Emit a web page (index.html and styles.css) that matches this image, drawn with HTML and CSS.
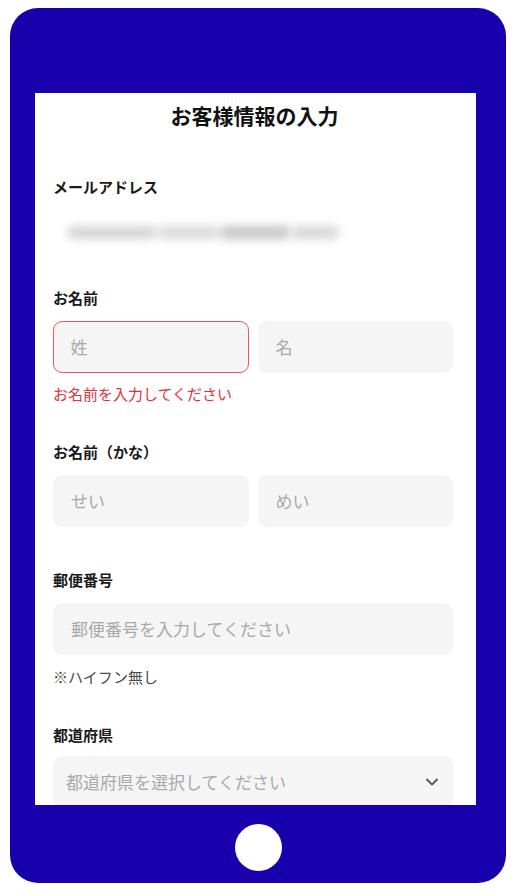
FILE: index.html
```html
<!DOCTYPE html>
<html lang="ja">
<head>
<meta charset="utf-8">
<link rel="stylesheet" href="styles.css">
</head>
<body>
<div class="phone">
  <div class="screen">
    <h1 class="title">お客様情報の入力</h1>

    <div class="field field-email">
      <div class="label email-label">メールアドレス</div>
      <div class="email-blur">
        <span class="blob b1"></span>
        <span class="blob b2"></span>
        <span class="blob b3"></span>
        <span class="blob b4"></span>
      </div>
    </div>

    <div class="field field-name">
      <div class="label">お名前</div>
      <div class="row">
        <div class="input error">姓</div>
        <div class="input">名</div>
      </div>
      <div class="error-text">お名前を入力してください</div>
    </div>

    <div class="field field-kana">
      <div class="label">お名前（かな）</div>
      <div class="row">
        <div class="input">せい</div>
        <div class="input">めい</div>
      </div>
    </div>

    <div class="field field-zip">
      <div class="label">郵便番号</div>
      <div class="input">郵便番号を入力してください</div>
      <div class="note">※ハイフン無し</div>
    </div>

    <div class="field field-pref">
      <div class="label pref-label">都道府県</div>
      <div class="input select">
        <span>都道府県を選択してください</span>
        <svg class="chev" width="14" height="10" viewBox="0 0 14 10"><path d="M2 2.5 L7 7.5 L12 2.5" fill="none" stroke="#555b66" stroke-width="2" stroke-linecap="round" stroke-linejoin="round"/></svg>
      </div>
    </div>
  </div>
  <div class="home"></div>
</div>
</body>
</html>
```

FILE: styles.css
```css
* { box-sizing: border-box; }
html, body { margin: 0; padding: 0; background: #ffffff; }
body {
  font-family: "Noto Sans CJK JP", "Noto Sans", sans-serif;
  width: 518px;
  height: 896px;
  overflow: hidden;
}
.phone {
  margin: 8px 0 0 10px;
  width: 496px;
  height: 875px;
  background: #1900ad;
  border-radius: 28px;
  padding: 85px 30px 0 25px;
  display: flex;
  flex-direction: column;
  align-items: flex-start;
}
.screen {
  width: 441px;
  height: 712px;
  background: #ffffff;
  overflow: hidden;
  padding: 10px 23px 0 18px;
}
.title {
  margin: 0;
  font-size: 21px;
  line-height: 24px;
  font-weight: 700;
  color: #111;
  text-align: center;
  padding-left: 3px;
}
.label {
  font-size: 15px;
  line-height: 20px;
  font-weight: 700;
  color: #1a1a1a;
  margin-bottom: 13px;
}
.field-email { margin-top: 50px; }
.label.email-label { margin-bottom: 25px; }
.email-blur {
  height: 20px;
  display: flex;
  align-items: center;
  padding-left: 14px;
}
.blob {
  display: block;
  height: 13px;
  border-radius: 7px;
  background: #cfcfcf;
  filter: blur(5px);
}
.b1 { width: 90px; background: #d4d4d4; }
.b2 { width: 62px; background: #dadada; }
.b3 { width: 72px; background: #c6c6c6; }
.b4 { width: 48px; background: #d6d6d6; }

.field-name { margin-top: 46px; }
.field-kana { margin-top: 38px; }
.field-zip { margin-top: 43px; }
.field-pref { margin-top: 38px; }

.label.pref-label { margin-bottom: 11px; }

.row {
  display: grid;
  grid-template-columns: 1fr 1fr;
  gap: 9px;
}
.input {
  height: 52px;
  border-radius: 9px;
  background: #f5f5f5;
  color: #a9a9a9;
  font-size: 17px;
  line-height: 52px;
  padding-left: 18px;
  white-space: nowrap;
}
.input.error {
  border: 1.5px solid #e8585c;
  line-height: 49px;
  padding-left: 16.5px;
}
.error-text {
  margin-top: 11px;
  font-size: 15px;
  line-height: 20px;
  color: #e5303a;
}
.note {
  margin-top: 12px;
  font-size: 15px;
  line-height: 20px;
  color: #4a4a4a;
}
.select {
  display: flex;
  align-items: center;
  justify-content: space-between;
  padding-left: 13px;
  padding-right: 14px;
}
.chev { display: block; }
.home {
  align-self: center;
  margin-top: 19px;
  margin-left: 5px;
  width: 47px;
  height: 47px;
  border-radius: 50%;
  background: #ffffff;
}
```
